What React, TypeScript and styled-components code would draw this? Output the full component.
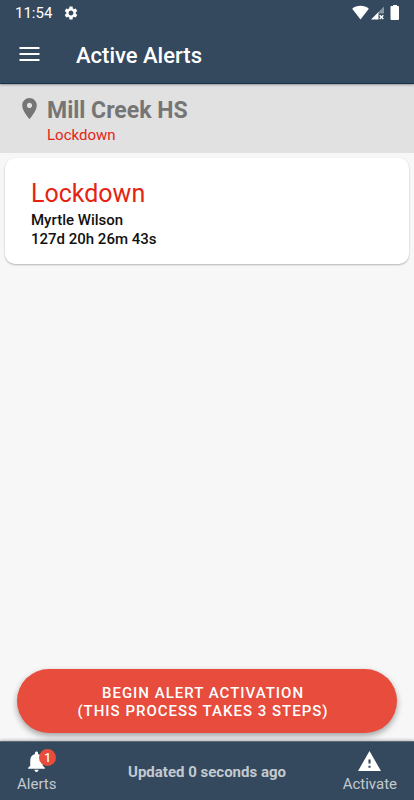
import React from "react";
import styled, { createGlobalStyle } from "styled-components";

const navy = "#34495e";
const red = "#e74c3c";
const brightRed = "#e42313";

const GlobalStyle = createGlobalStyle`
  *, *::before, *::after { box-sizing: border-box; }
  body { margin: 0; background: #f7f7f7; font-family: Roboto, "Noto Sans", sans-serif; }
  h1, h2, h3, p { margin: 0; }
  button { font: inherit; border: 0; cursor: pointer; }
  svg { display: block; flex: none; }
`;

const Screen = styled.div`
  display: flex;
  flex-direction: column;
  min-height: 100vh;
`;

const TopBar = styled.header`
  background: ${navy};
  color: #fff;
  border-bottom: 1px solid #15304a;
  box-shadow: 0 1px 2px rgba(0, 0, 0, 0.35);
  z-index: 1;
`;

const StatusBar = styled.div`
  display: flex;
  align-items: center;
  height: 26px;
  padding: 0 13px 0 15px;
  font-size: 15px;
  line-height: 26px;
`;

const StatusIcons = styled.div`
  display: flex;
  align-items: center;
  gap: 1px;
  margin-left: auto;
`;

const Clock = styled.span`
  margin-right: 11px;
`;

const TitleRow = styled.div`
  display: flex;
  align-items: center;
  height: 57px;
  padding: 3px 16px 0;
`;

const MenuButton = styled.button`
  display: flex;
  padding: 0;
  margin-right: 32px;
  background: none;
  color: inherit;
`;

const PageTitle = styled.h1`
  font-size: 22px;
  line-height: 28px;
  font-weight: 500;
`;

const Site = styled.section`
  display: flex;
  gap: 5px;
  padding: 12px 16px 8px 17px;
  background: #e1e1e1;
  color: #757575;
`;

const SiteName = styled.h2`
  font-size: 23px;
  line-height: 29px;
  font-weight: 700;
`;

const SiteStatus = styled.p`
  font-size: 15px;
  line-height: 20px;
  color: ${brightRed};
`;

const Main = styled.main`
  display: flex;
  flex: 1;
  flex-direction: column;
  padding: 5px 5px 8px;
`;

const AlertCard = styled.article`
  padding: 19px 26px 15px;
  border-radius: 10px;
  background: #fff;
  box-shadow: 0 1px 2px rgba(0, 0, 0, 0.28);
  color: #111;
  font-size: 15px;
  line-height: 19px;
  font-weight: 500;
`;

const AlertTitle = styled.h3`
  margin-bottom: 1px;
  font-size: 25px;
  line-height: 33px;
  font-weight: 400;
  color: ${brightRed};
`;

const ActivateButton = styled.button`
  margin: auto 12px 0;
  padding: 15px 24px 13px 16px;
  border-radius: 32px;
  background: ${red};
  box-shadow: 0 3px 6px rgba(0, 0, 0, 0.35);
  color: #fff;
  && { font-size: 15px; font-weight: 500; line-height: 18px; }
  letter-spacing: 1px;
  text-transform: uppercase;
`;

const ButtonLine = styled.span`
  display: block;
`;

const BottomBar = styled.nav`
  display: grid;
  grid-template-columns: 1fr auto 1fr;
  align-items: center;
  height: 59px;
  padding: 0 17px;
  border-top: 1px solid #5d6a77;
  background: ${navy};
  box-shadow: 0 -1px 3px rgba(0, 0, 0, 0.25);
  color: #c3c9cf;
`;

const Tab = styled.button<{ $side: "start" | "end" }>`
  display: flex;
  flex-direction: column;
  align-items: center;
  justify-self: ${({ $side }) => $side};
  padding: 0;
  background: none;
  color: inherit;
  && { font-size: 15px; line-height: 20px; }
`;

const TabIcon = styled.span`
  position: relative;
  color: #fff;
`;

const Badge = styled.span`
  position: absolute;
  top: 0;
  left: 15px;
  width: 17px;
  height: 17px;
  border-radius: 50%;
  background: ${red};
  font-size: 12px;
  line-height: 18px;
  font-weight: 500;
  text-align: center;
`;

const Updated = styled.p`
  padding-top: 2px;
  font-size: 15px;
  line-height: 20px;
  font-weight: 700;
`;

type IconProps = { size: number; d: string };

const Icon = ({ size, d }: IconProps) => (
  <svg width={size} height={size} viewBox="0 0 24 24" fill="currentColor" aria-hidden="true">
    <path d={d} />
  </svg>
);

const icons = {
  gear: "M19.14 12.94c.04-.3.06-.61.06-.94 0-.32-.02-.64-.07-.94l2.03-1.58c.18-.14.23-.41.12-.61l-1.92-3.32c-.12-.22-.37-.29-.59-.22l-2.39.96c-.5-.38-1.03-.7-1.62-.94l-.36-2.54c-.04-.24-.24-.41-.48-.41h-3.84c-.24 0-.43.17-.47.41l-.36 2.54c-.59.24-1.13.57-1.62.94l-2.39-.96c-.22-.08-.47 0-.59.22L2.74 8.87c-.12.21-.08.47.12.61l2.03 1.58c-.05.3-.09.63-.09.94s.02.64.07.94l-2.03 1.58c-.18.14-.23.41-.12.61l1.92 3.32c.12.22.37.29.59.22l2.39-.96c.5.38 1.03.7 1.62.94l.36 2.54c.05.24.24.41.48.41h3.84c.24 0 .44-.17.47-.41l.36-2.54c.59-.24 1.13-.56 1.62-.94l2.39.96c.22.08.47 0 .59-.22l1.92-3.32c.12-.22.07-.47-.12-.61l-2.01-1.58zM12 15.6c-1.98 0-3.6-1.62-3.6-3.6s1.62-3.6 3.6-3.6 3.6 1.62 3.6 3.6-1.62 3.6-3.6 3.6z",
  pin: "M12 2C8.13 2 5 5.13 5 9c0 5.25 7 13 7 13s7-7.75 7-13c0-3.87-3.13-7-7-7zm0 9.500c-1.380 0-2.500-1.120-2.500-2.500s1.120-2.500 2.500-2.500 2.500 1.120 2.500 2.500-1.120 2.500-2.500 2.500z",
  bell: "M12 22c1.100 0 2-.9 2-2h-4c0 1.100.89 2 2 2zm6-6v-5c0-3.070-1.640-5.640-4.500-6.320V4c0-.83-.67-1.500-1.500-1.500s-1.500.67-1.500 1.500v.68C7.630 5.360 6 7.920 6 11v5l-2 2v1h16v-1l-2-2z",
  warning: "M1 21h22L12 2 1 21zm12-3h-2v-2h2v2zm0-4h-2v-4h2v4z",
};

const MenuIcon = () => (
  <svg width="28" height="24" viewBox="0 0 28 24" fill="currentColor" aria-hidden="true">
    <path d="M3.500 3h20v2H3.500zM3.500 9h20v2H3.500zM3.500 15h20v2H3.500z" />
  </svg>
);

const WifiIcon = () => (
  <svg width="18" height="16" viewBox="0 0 18 16" fill="#fff" aria-hidden="true">
    <path d="M8.500 14.500.2 3.700C4.500-.1 12.500-.1 16.800 3.700z" />
  </svg>
);

const SignalIcon = () => (
  <svg width="15" height="16" viewBox="0 0 15 16" aria-hidden="true">
    <path d="M13 1.500v7H7v-1z" fill="#8794a1" />
    <path d="M7.500 7v7.500H0z" fill="#fff" />
    <path d="m8.700 10.300 3.600 3.800m0-3.800-3.600 3.800" stroke="#fff" strokeWidth="1.400" />
  </svg>
);

const BatteryIcon = () => (
  <svg width="14" height="16" viewBox="0 0 14 16" fill="#fff" aria-hidden="true">
    <path d="M6 0h4v1h1.200q.8 0 .8.800V14q0 1-1 1H4.500q-1 0-1-1V1.800q0-.8.800-.8H6z" />
  </svg>
);

export default function App() {
  return (
    <>
      <GlobalStyle />
      <Screen>
        <TopBar>
          <StatusBar>
            <Clock>11:54</Clock>
            <Icon size={16} d={icons.gear} />
            <StatusIcons>
              <WifiIcon />
              <SignalIcon />
              <BatteryIcon />
            </StatusIcons>
          </StatusBar>
          <TitleRow>
            <MenuButton type="button" aria-label="Open menu">
              <MenuIcon />
            </MenuButton>
            <PageTitle>Active Alerts</PageTitle>
          </TitleRow>
        </TopBar>
        <Site>
          <Icon size={25} d={icons.pin} />
          <div>
            <SiteName>Mill Creek HS</SiteName>
            <SiteStatus>Lockdown</SiteStatus>
          </div>
        </Site>
        <Main>
          <AlertCard>
            <AlertTitle>Lockdown</AlertTitle>
            <p>Myrtle Wilson</p>
            <p>127d 20h 26m 43s</p>
          </AlertCard>
          <ActivateButton type="button">
            <ButtonLine>Begin alert activation</ButtonLine>
            <ButtonLine>(This process takes 3 steps)</ButtonLine>
          </ActivateButton>
        </Main>
        <BottomBar>
          <Tab type="button" $side="start">
            <TabIcon>
              <Icon size={25} d={icons.bell} />
              <Badge>1</Badge>
            </TabIcon>
            Alerts
          </Tab>
          <Updated>Updated 0 seconds ago</Updated>
          <Tab type="button" $side="end">
            <TabIcon>
              <Icon size={25} d={icons.warning} />
            </TabIcon>
            Activate
          </Tab>
        </BottomBar>
      </Screen>
    </>
  );
}
